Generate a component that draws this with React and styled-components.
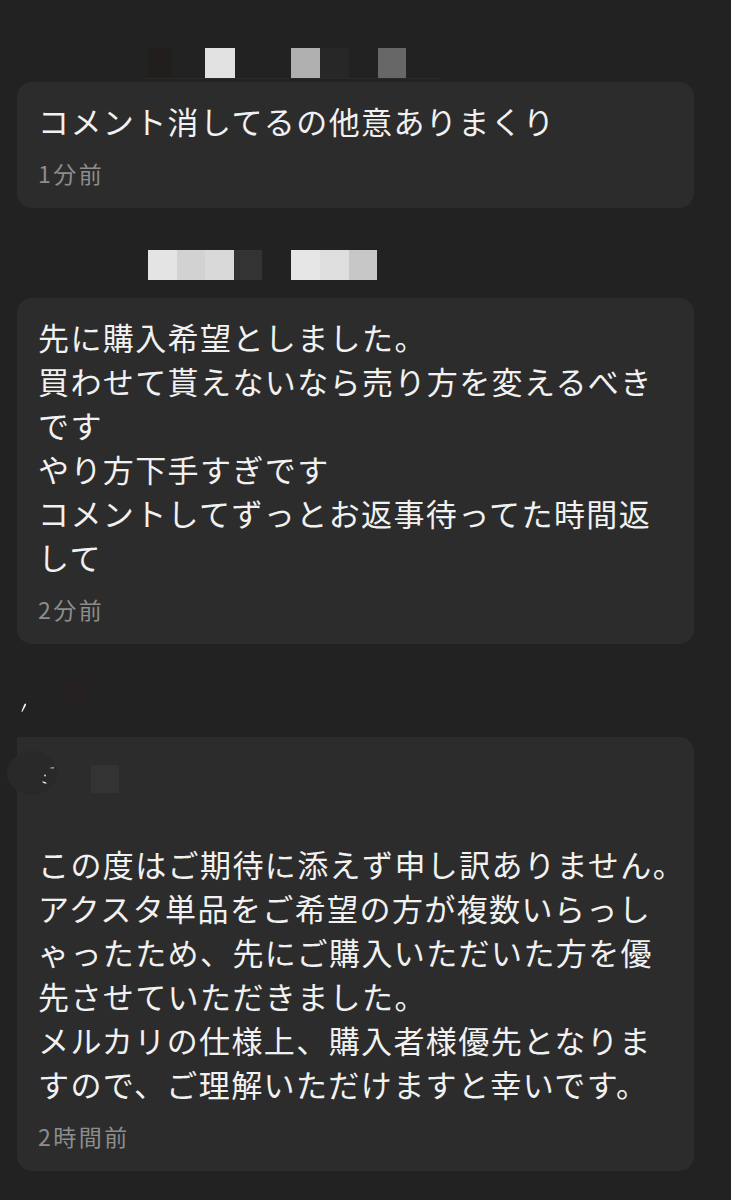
import React from "react"
import styled, { createGlobalStyle } from "styled-components"

const GlobalStyle = createGlobalStyle`
  html, body {
    margin: 0;
    padding: 0;
    background: #222222;
  }
  body {
    font-family: "Noto Sans CJK JP", "Noto Sans", sans-serif;
    -webkit-font-smoothing: antialiased;
  }
`

const Screen = styled.div`
  width: 731px;
  min-height: 1200px;
  background: #222222;
  padding: 48px 37px 0 17px;
  box-sizing: border-box;
  display: flex;
  flex-direction: column;
`

const Group = styled.div`
  display: flex;
  flex-direction: column;
  margin-top: ${p => p.mt || 0}px;
`

const NameRow = styled.div`
  height: ${p => p.h}px;
  margin-bottom: ${p => p.mb || 0}px;
  display: flex;
  align-items: flex-start;
`

const Mosaic = styled.div`
  display: flex;
  margin-left: ${p => p.ml}px;
  margin-top: ${p => p.mt || 0}px;
  border-bottom: ${p => (p.rule ? "1px solid #2a2a2a" : "none")};
  width: ${p => (p.w ? `${p.w}px` : "auto")};
`

const Tile = styled.div`
  width: ${p => p.w}px;
  height: ${p => p.h || 30}px;
  background: ${p => p.c || "transparent"};
  flex-shrink: 0;
`

const Tick = styled.svg`
  margin-left: 4px;
  margin-top: 24px;
  flex-shrink: 0;
`

const Bubble = styled.div`
  background: #2c2c2c;
  border-radius: 15px;
  border-top-left-radius: ${p => (p.flatCorner ? "2px" : "15px")};
  padding: 17px 21px 20px 21px;
  display: flex;
  flex-direction: column;
`

const Line = styled.div`
  color: #f1f1f1;
  font-size: 31px;
  letter-spacing: 1.4px;
  line-height: 44px;
  height: 44px;
  white-space: nowrap;
`

const HeadLine = styled.div`
  height: 44px;
  display: flex;
  align-items: center;
`

const Avatar = styled.div`
  width: 50px;
  height: 44px;
  margin-left: -31px;
  margin-top: -6px;
  border-radius: 50%;
  background: #292929;
  display: flex;
  align-items: center;
  justify-content: center;
  flex-shrink: 0;
`

const Square = styled.div`
  width: 28px;
  height: 28px;
  margin-left: 34px;
  margin-top: 6px;
  background: #333333;
`

const Time = styled.div`
  margin-top: 15px;
  color: #8d8d8d;
  font-size: 23px;
  letter-spacing: 2.5px;
  line-height: 30px;
`

function Message({ lines, time, flatCorner, head }) {
  return (
    <Bubble flatCorner={flatCorner}>
      {head}
      {lines.map((l, i) => (
        <Line key={i}>{l}</Line>
      ))}
      <Time>{time}</Time>
    </Bubble>
  )
}

export default function App() {
  return (
    <Screen>
      <GlobalStyle />

      <Group>
        <NameRow h={30} mb={4}>
          <Mosaic ml={128} rule w={295}>
            <Tile w={3} />
            <Tile w={24} c="#221e1e" />
            <Tile w={33} />
            <Tile w={30} c="#e2e2e2" />
            <Tile w={56} />
            <Tile w={29} c="#b0b0b0" />
            <Tile w={29} c="#272727" />
            <Tile w={29} />
            <Tile w={28} c="#676767" />
          </Mosaic>
        </NameRow>
        <Message
          lines={["コメント消してるの他意ありまくり"]}
          time="1分前"
        />
      </Group>

      <Group mt={42}>
        <NameRow h={30} mb={18}>
          <Mosaic ml={131}>
            <Tile w={29} c="#e4e4e4" />
            <Tile w={28} c="#d2d2d2" />
            <Tile w={29} c="#d9d9d9" />
            <Tile w={28} c="#333333" />
            <Tile w={29} />
            <Tile w={29} c="#e6e6e6" />
            <Tile w={29} c="#dedede" />
            <Tile w={28} c="#c7c7c7" />
          </Mosaic>
        </NameRow>
        <Message
          lines={[
            "先に購入希望としました。",
            "買わせて貰えないなら売り方を変えるべき",
            "です",
            "やり方下手すぎです",
            "コメントしてずっとお返事待ってた時間返",
            "して",
          ]}
          time="2分前"
        />
      </Group>

      <Group mt={35}>
        <NameRow h={58}>
          <Tick width="6" height="10" viewBox="0 0 6 10">
            <path d="M4.5 0.5 C5.6 1 5 2.5 3.5 5 L1.2 9 C0.6 9.4 0.4 8.6 0.8 7.6 L3 2 C3.4 0.9 3.9 0.4 4.5 0.5 Z" fill="#f4f4f4" />
          </Tick>
          <Mosaic ml={35}>
            <Tile w={28} h={25} c="#241f20" />
          </Mosaic>
        </NameRow>
        <Message
          flatCorner
          head={
            <>
              <HeadLine>
                <Avatar>
                  <svg width="50" height="44" viewBox="0 0 50 44">
                    <path d="M42 17 L47 16.2 L46.5 17.6 Z" fill="#f2f2f2" />
                    <circle cx="38" cy="24.5" r="0.9" fill="#e0e0e0" />
                    <path d="M35 30.5 C37 30.2 39 31 40 32.5 C38 32.8 36 32.2 35 30.5 Z" fill="#f2f2f2" />
                  </svg>
                </Avatar>
                <Square />
              </HeadLine>
              <Line />
            </>
          }
          lines={[
            "この度はご期待に添えず申し訳ありません。",
            "アクスタ単品をご希望の方が複数いらっし",
            "ゃったため、先にご購入いただいた方を優",
            "先させていただきました。",
            "メルカリの仕様上、購入者様優先となりま",
            "すので、ご理解いただけますと幸いです。",
          ]}
          time="2時間前"
        />
      </Group>
    </Screen>
  )
}
